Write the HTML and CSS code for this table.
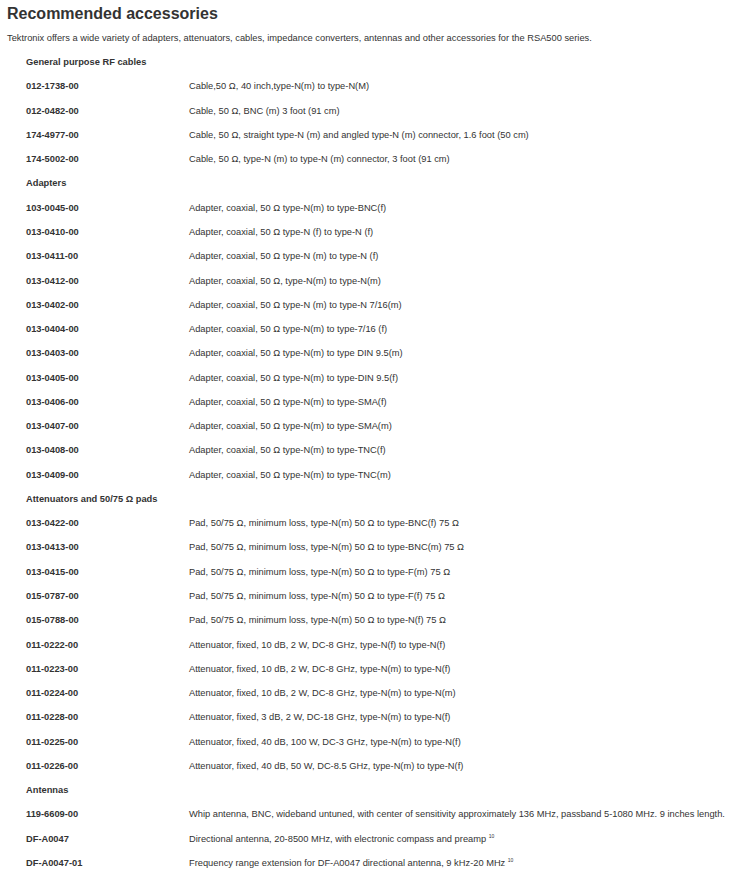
FILE: index.html
```html
<!DOCTYPE html>
<html lang="en">
<head>
    <meta charset="UTF-8">
    <title>Recommended accessories</title>
    <link rel="stylesheet" href="styles.css">
</head>
<body>
    <h1>Recommended accessories</h1>
    <p class="intro">Tektronix offers a wide variety of adapters, attenuators, cables, impedance converters, antennas and other accessories for the RSA500 series.</p>

    <div class="accessories">
        <div class="group">General purpose RF cables</div>
        <div class="code">012-1738-00</div><div>Cable,50 &Omega;, 40 inch,type-N(m) to type-N(M)</div>
        <div class="code">012-0482-00</div><div>Cable, 50 &Omega;, BNC (m) 3 foot (91 cm)</div>
        <div class="code">174-4977-00</div><div>Cable, 50 &Omega;, straight type-N (m) and angled type-N (m) connector, 1.6 foot (50 cm)</div>
        <div class="code">174-5002-00</div><div>Cable, 50 &Omega;, type-N (m) to type-N (m) connector, 3 foot (91 cm)</div>

        <div class="group">Adapters</div>
        <div class="code">103-0045-00</div><div>Adapter, coaxial, 50 &Omega; type-N(m) to type-BNC(f)</div>
        <div class="code">013-0410-00</div><div>Adapter, coaxial, 50 &Omega; type-N (f) to type-N (f)</div>
        <div class="code">013-0411-00</div><div>Adapter, coaxial, 50 &Omega; type-N (m) to type-N (f)</div>
        <div class="code">013-0412-00</div><div>Adapter, coaxial, 50 &Omega;, type-N(m) to type-N(m)</div>
        <div class="code">013-0402-00</div><div>Adapter, coaxial, 50 &Omega; type-N (m) to type-N 7/16(m)</div>
        <div class="code">013-0404-00</div><div>Adapter, coaxial, 50 &Omega; type-N(m) to type-7/16 (f)</div>
        <div class="code">013-0403-00</div><div>Adapter, coaxial, 50 &Omega; type-N(m) to type DIN 9.5(m)</div>
        <div class="code">013-0405-00</div><div>Adapter, coaxial, 50 &Omega; type-N(m) to type-DIN 9.5(f)</div>
        <div class="code">013-0406-00</div><div>Adapter, coaxial, 50 &Omega; type-N(m) to type-SMA(f)</div>
        <div class="code">013-0407-00</div><div>Adapter, coaxial, 50 &Omega; type-N(m) to type-SMA(m)</div>
        <div class="code">013-0408-00</div><div>Adapter, coaxial, 50 &Omega; type-N(m) to type-TNC(f)</div>
        <div class="code">013-0409-00</div><div>Adapter, coaxial, 50 &Omega; type-N(m) to type-TNC(m)</div>

        <div class="group">Attenuators and 50/75 &Omega; pads</div>
        <div class="code">013-0422-00</div><div>Pad, 50/75 &Omega;, minimum loss, type-N(m) 50 &Omega; to type-BNC(f) 75 &Omega;</div>
        <div class="code">013-0413-00</div><div>Pad, 50/75 &Omega;, minimum loss, type-N(m) 50 &Omega; to type-BNC(m) 75 &Omega;</div>
        <div class="code">013-0415-00</div><div>Pad, 50/75 &Omega;, minimum loss, type-N(m) 50 &Omega; to type-F(m) 75 &Omega;</div>
        <div class="code">015-0787-00</div><div>Pad, 50/75 &Omega;, minimum loss, type-N(m) 50 &Omega; to type-F(f) 75 &Omega;</div>
        <div class="code">015-0788-00</div><div>Pad, 50/75 &Omega;, minimum loss, type-N(m) 50 &Omega; to type-N(f) 75 &Omega;</div>
        <div class="code">011-0222-00</div><div>Attenuator, fixed, 10 dB, 2 W, DC-8 GHz, type-N(f) to type-N(f)</div>
        <div class="code">011-0223-00</div><div>Attenuator, fixed, 10 dB, 2 W, DC-8 GHz, type-N(m) to type-N(f)</div>
        <div class="code">011-0224-00</div><div>Attenuator, fixed, 10 dB, 2 W, DC-8 GHz, type-N(m) to type-N(m)</div>
        <div class="code">011-0228-00</div><div>Attenuator, fixed, 3 dB, 2 W, DC-18 GHz, type-N(m) to type-N(f)</div>
        <div class="code">011-0225-00</div><div>Attenuator, fixed, 40 dB, 100 W, DC-3 GHz, type-N(m) to type-N(f)</div>
        <div class="code">011-0226-00</div><div>Attenuator, fixed, 40 dB, 50 W, DC-8.5 GHz, type-N(m) to type-N(f)</div>

        <div class="group">Antennas</div>
        <div class="code">119-6609-00</div><div>Whip antenna, BNC, wideband untuned, with center of sensitivity approximately 136 MHz, passband 5-1080 MHz. 9 inches length.</div>
        <div class="code">DF-A0047</div><div>Directional antenna, 20-8500 MHz, with electronic compass and preamp <sup>10</sup></div>
        <div class="code">DF-A0047-01</div><div>Frequency range extension for DF-A0047 directional antenna, 9 kHz-20 MHz <sup>10</sup></div>
    </div>
</body>
</html>
```

FILE: styles.css
```css
body {
    margin: 0;
    padding: 0 7px;
    font-family: "Liberation Sans", Arial, sans-serif;
    color: #333;
    background: #fff;
}

h1 {
    margin: 4px 0 0;
    font-size: 16px;
    line-height: 20px;
    font-weight: bold;
}

.intro {
    margin: 7px 0 0;
    font-size: 9.3px;
    line-height: 14px;
}

/* lista de acessórios: código | descrição */
.accessories {
    display: grid;
    grid-template-columns: 163px auto;
    grid-auto-rows: 24.27px;
    align-items: center;
    margin: 5px 0 0 19px;
    font-size: 9.3px;
    white-space: nowrap;
}

.accessories .group {
    grid-column: 1 / -1;
    font-weight: bold;
}

.accessories .code {
    font-weight: bold;
}

sup {
    font-size: 5px;
    vertical-align: 4px;
    line-height: 0;
}
```
